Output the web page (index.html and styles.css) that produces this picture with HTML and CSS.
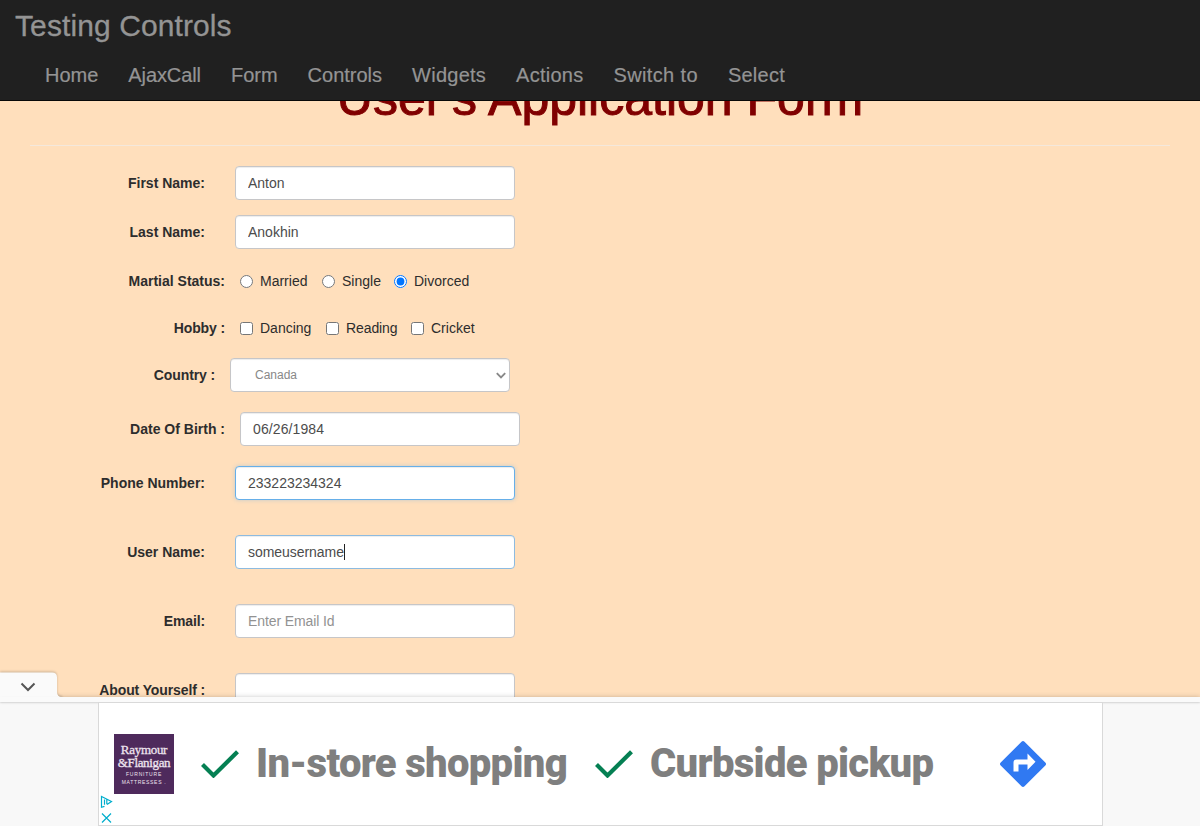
FILE: index.html
```
<!DOCTYPE html>
<html lang="en">
<head>
<meta charset="utf-8">
<title>Testing Controls</title>
<link rel="stylesheet" href="styles.css">
</head>
<body>
<div class="page">
  <header class="navbar">
    <a class="brand">Testing Controls</a>
    <nav class="menu">
      <a>Home</a><a class="snug">AjaxCall</a><a>Form</a><a>Controls</a><a class="roomy">Widgets</a><a class="roomy">Actions</a><a class="roomier">Switch to</a><a class="roomy">Select</a>
    </nav>
  </header>
  <main class="content">
    <h1 class="heading">User's Application Form</h1>
    <hr class="rule">
    <form class="form">
      <div class="row"><label class="label">First Name:</label><input class="control" type="text" value="Anton"></div>
      <div class="row"><label class="label">Last Name:</label><input class="control" type="text" value="Anokhin"></div>
      <div class="row row-wide options">
        <span class="label">Martial Status:</span>
        <label class="option o1"><input type="radio" name="status">Married</label>
        <label class="option o2"><input type="radio" name="status">Single</label>
        <label class="option"><input type="radio" name="status" checked>Divorced</label>
      </div>
      <div class="row row-wide options hobby">
        <span class="label tight">Hobby :</span>
        <label class="option h1"><input type="checkbox">Dancing</label>
        <label class="option h2"><input type="checkbox">Reading</label>
        <label class="option"><input type="checkbox">Cricket</label>
      </div>
      <div class="row row-country"><label class="label tight">Country :</label>
        <div class="select-wrap">
          <select class="control select"><option>Canada</option></select>
          <svg class="caret" width="10" height="7" viewBox="0 0 10 7"><path d="M.8 1.2 5 5.400 9.200 1.200" fill="none" stroke="#888" stroke-width="1.900"/></svg>
        </div>
      </div>
      <div class="row row-wide row-birth"><label class="label">Date Of Birth :</label><input class="control birth" type="text" value="06/26/1984"></div>
      <div class="row row-phone"><label class="label">Phone Number:</label><input class="control glow" type="text" value="233223234324"></div>
      <div class="row row-spaced"><label class="label">User Name:</label><div class="control fading">someusername<span class="cursor"></span></div></div>
      <div class="row row-spaced"><label class="label tight">Email:</label><input class="control email" type="text" placeholder="Enter Email Id"></div>
      <div class="row row-spaced"><label class="label tight">About Yourself :</label><input class="control" type="text"></div>
    </form>
  </main>
  <footer class="dock">
    <svg class="tab" width="66" height="30" viewBox="0 0 66 30">
      <path class="tab-shape" d="M-2 .5H52Q57 .5 57 5.500V20Q57 25 62 25V31H-2Z"/>
      <path d="M21.500 11.500 28 18 34.500 11.500" fill="none" stroke="#555" stroke-width="2"/>
    </svg>
    <div class="strip"></div>
    <section class="ad">
      <div class="logo">
        <span class="logo-name">Raymour</span>
        <span class="logo-name second">&amp;Flanigan</span>
        <span class="logo-sub">FURNITURE</span>
        <span class="logo-sub last">MATTRESSES .</span>
      </div>
      <svg class="check" width="38" height="28" viewBox="0 0 38 28"><path d="M1.500 14.500 12.500 25.500 36.500 1.800" fill="none" stroke="#058053" stroke-width="4.200"/></svg>
      <span class="claim claim-store">In-store shopping</span>
      <svg class="check" width="38" height="28" viewBox="0 0 38 28"><path d="M1.500 14.500 12.500 25.500 36.500 1.800" fill="none" stroke="#058053" stroke-width="4.200"/></svg>
      <span class="claim claim-pickup">Curbside pickup</span>
      <svg class="direction" width="48" height="48" viewBox="0 0 48 48">
        <path d="M22.500 1.700Q24 .2 25.500 1.700L46.300 22.500Q47.800 24 46.300 25.500L25.500 46.300Q24 47.800 22.500 46.300L1.700 25.500Q.2 24 1.700 22.500Z" fill="#3079f2"/>
        <path d="M14.500 31.500V22.500Q14.500 19.500 17.500 19.500H28.500V13.500L36.500 21.800 28.500 30V24.500H19.500V31.500Z" fill="#fff"/>
      </svg>
      <svg class="choices" width="13" height="30" viewBox="0 0 13 30" fill="none" stroke="#00aecd" stroke-width="1.200">
        <path d="M4.500 11.400 1.500 12.300V1.500L11.500 6.500 7 9.500M4.500 9.800V4.500M6.800 4.500V9.300"/>
        <path d="M2 18.500 11 27.500M11 18.500 2 27.500"/>
      </svg>
    </section>
  </footer>
</div>
</body>
</html>
```

FILE: styles.css
```
* { box-sizing: border-box; }
body { margin: 0; font: 14px/20px "Liberation Sans", Arial, sans-serif; color: #2d2d2d; }
.page { display: flex; flex-direction: column; height: 826px; overflow: hidden; background: #ffdfbc; }

.navbar { position: relative; z-index: 1; flex: none; height: 101px; background: #202020; border-bottom: 1px solid #080808; color: #949494; }
.brand { display: block; height: 50px; padding-left: 15px; font-size: 30px; line-height: 51px; letter-spacing: .1px; -webkit-text-stroke: .3px; }
.menu { display: flex; padding-left: 30px; font-size: 20px; line-height: 50px; -webkit-text-stroke: .2px; }
.menu a { padding: 0 15px; }
.menu .snug { letter-spacing: -.1px; }
.menu .roomy { letter-spacing: .25px; }
.menu .roomier { letter-spacing: .37px; }

.content { flex: none; height: 596px; overflow: hidden; padding: 0 30px; }
.heading { margin: -30px 0 0; text-align: center; font-size: 50px; line-height: 55px; font-weight: 400; color: #800000; -webkit-text-stroke: 1px #800000; white-space: nowrap; }
.rule { margin: 19px 0 20px; border: 0; border-top: 1px solid #f4e8dc; }

.form { display: flex; flex-direction: column; }
.row { display: flex; align-items: center; height: 34px; margin-bottom: 15px; }
.label { width: 175px; margin-right: 30px; text-align: right; font-weight: 700; white-space: nowrap; }
.tight { letter-spacing: -.12px; }
.row-wide .label { width: 195px; margin-right: 15px; }
.control { width: 280px; height: 34px; padding: 6px 12px; border: 1px solid #c6c6c8; border-radius: 4px; background: #fff; color: #4c4c4c; font: inherit; box-shadow: inset 0 1px 1px rgba(0,0,0,.075); outline: 0; }
.control::placeholder { color: #929292; opacity: 1; }
.birth { letter-spacing: .1px; }
.email { letter-spacing: -.1px; }
.glow { border-color: #66afe9; box-shadow: inset 0 1px 1px rgba(0,0,0,.075), 0 0 4px rgba(102,175,233,.4); }
.fading { display: flex; align-items: center; letter-spacing: -.05px; border-color: #8dbbe0; }
.cursor { width: 1px; height: 16px; background: #222; }

.options { margin-bottom: 13px; }
.option { display: flex; align-items: center; }
.option input { width: 13px; height: 13px; margin: 0 7px 0 0; }
.o1 { width: 82px; }
.o2 { width: 72px; }
.h1 { width: 86px; }
.h2 { width: 85px; letter-spacing: -.1px; }

.row-country { margin-bottom: 20px; }
.row-country .label { width: 185px; margin-right: 15px; }
.select-wrap { position: relative; }
.select { display: block; appearance: none; padding-left: 24px; font-size: 12px; color: #888; }
.caret { position: absolute; right: 4px; top: 14px; }
.row-birth { margin-bottom: 20px; }
.row-phone, .row-spaced { margin-bottom: 35px; }

.dock { position: relative; flex: none; height: 129px; background: #f8f8f8; box-shadow: 0 0 5px rgba(0,0,0,.2); }
.tab { position: absolute; left: 0; top: -25px; filter: drop-shadow(0 -1px 1px rgba(0,0,0,.2)); clip-path: inset(-4px 0 4px 0); }
.tab-shape { fill: #fafafa; }
.strip { position: relative; height: 5px; background: #fafafa; box-shadow: 0 1px 2px rgba(0,0,0,.15); }
.ad { position: relative; display: flex; align-items: center; width: 1005px; height: 124px; margin-left: 98px; padding-left: 15px; border: 1px solid #d9d9d9; background: #fff; }
.logo { display: flex; flex-direction: column; align-items: center; width: 60px; height: 60px; padding-top: 9px; background: #4e2a5c; color: #eee4ef; }
.logo-name { font: 13px/13px "Liberation Serif", serif; letter-spacing: -.3px; -webkit-text-stroke: .3px; }
.second { letter-spacing: -.35px; }
.logo-sub { margin-top: 1px; font: 5px/8px "Liberation Sans", sans-serif; letter-spacing: .8px; white-space: nowrap; }
.last { margin-top: 0; letter-spacing: .7px; }
.check { margin-left: 27px; flex: none; }
.claim { font: 900 40px/48px Roboto, sans-serif; letter-spacing: -.68px; color: #7f7f7f; white-space: nowrap; }
.claim-store { width: 329px; padding-left: 17px; }
.claim-pickup { width: 350px; padding-left: 17px; }
.direction { flex: none; margin-left: 15.5px; }
.choices { position: absolute; left: 1px; top: 92px; }
```
